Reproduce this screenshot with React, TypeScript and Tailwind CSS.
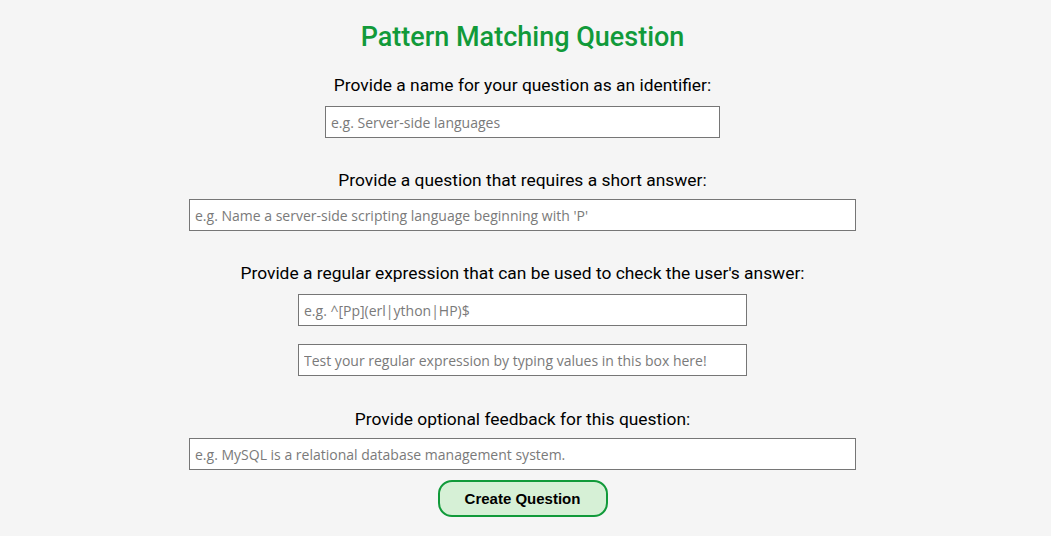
import React from "react";

const inputCls =
  "block h-[32px] border border-[#767676] bg-white px-[5px] text-[14px] text-black placeholder:text-[#7a7a7a] outline-none font-['Open_Sans',sans-serif]";
const labelCls = "h-[20px] leading-[20px] text-[17.4px] text-black text-center font-['Roboto',sans-serif]";

export default function App() {
  return (
    <div className="min-h-[536px] w-full bg-[#f5f5f5]">
      <div className="flex w-[1045px] flex-col items-center">
        <h1 className="mt-[21px] h-[32px] text-[27px] leading-[32px] font-medium text-[#119a3a] font-['Roboto',sans-serif]">
          Pattern Matching Question
        </h1>
        <div className={`${labelCls} mt-[22px]`}>Provide a name for your question as an identifier:</div>
        <input className={`${inputCls} mt-[11px] w-[395px]`} placeholder="e.g. Server-side languages" />
        <div className={`${labelCls} mt-[32px]`}>Provide a question that requires a short answer:</div>
        <input
          className={`${inputCls} mt-[9px] w-[667px]`}
          placeholder="e.g. Name a server-side scripting language beginning with 'P'"
        />
        <div className={`${labelCls} mt-[32px]`}>
          Provide a regular expression that can be used to check the user's answer:
        </div>
        <input className={`${inputCls} mt-[11px] w-[449px]`} placeholder="e.g. ^[Pp](erl|ython|HP)$" />
        <input
          className={`${inputCls} mt-[18px] w-[449px]`}
          placeholder="Test your regular expression by typing values in this box here!"
        />
        <div className={`${labelCls} mt-[33px]`}>Provide optional feedback for this question:</div>
        <input
          className={`${inputCls} mt-[9px] w-[667px]`}
          placeholder="e.g. MySQL is a relational database management system."
        />
        <button className="mt-[10px] h-[37px] w-[170px] rounded-[14px] border-2 border-[#119a3a] bg-[#d6f0d6] pt-[2px] text-[15px] font-bold text-black font-['Liberation_Sans',sans-serif]">
          Create Question
        </button>
      </div>
    </div>
  );
}
